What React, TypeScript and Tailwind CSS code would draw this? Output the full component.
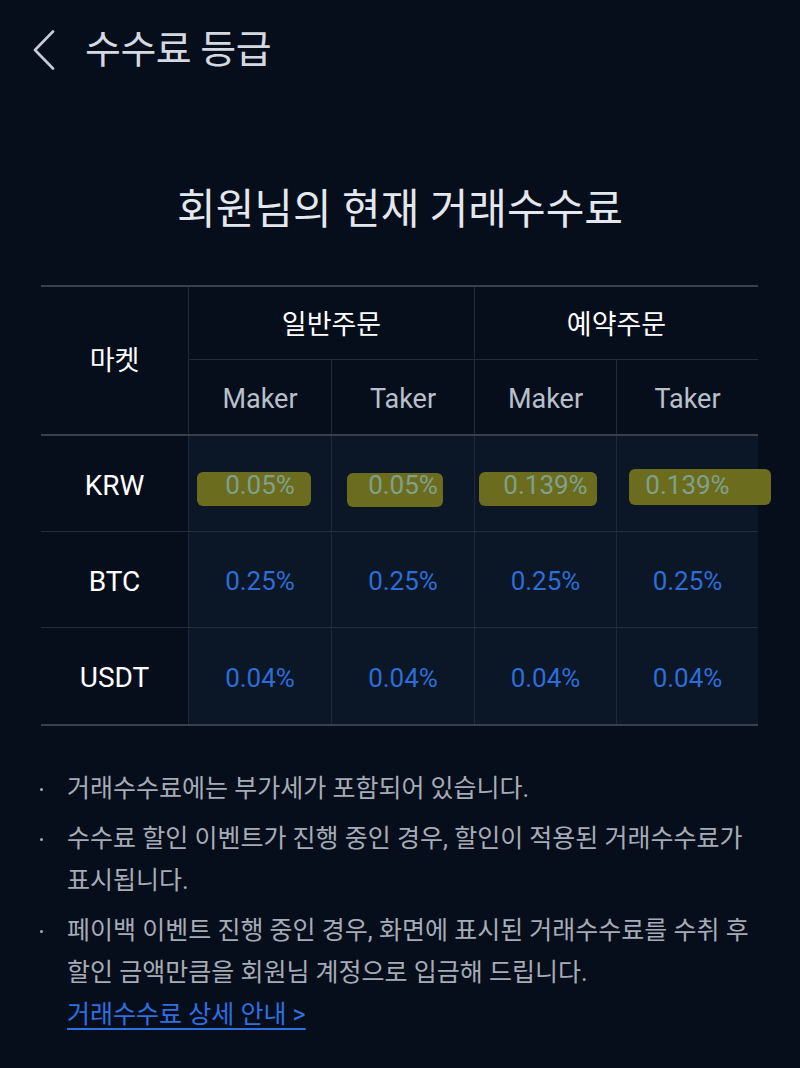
type Mark = { left: number; top: number; width: number; height: number };

type Row = {
  market: string;
  values: string[];
  marks?: Mark[];
};

const rows: Row[] = [
  {
    market: "KRW",
    values: ["0.05%", "0.05%", "0.139%", "0.139%"],
    marks: [
      { left: 8, top: 36, width: 114, height: 34 },
      { left: 15, top: 37, width: 96, height: 34 },
      { left: 4, top: 36, width: 118, height: 34 },
      { left: 12, top: 33, width: 142, height: 36 },
    ],
  },
  { market: "BTC", values: ["0.25%", "0.25%", "0.25%", "0.25%"] },
  { market: "USDT", values: ["0.04%", "0.04%", "0.04%", "0.04%"] },
];

const notes = [
  "거래수수료에는 부가세가 포함되어 있습니다.",
  "수수료 할인 이벤트가 진행 중인 경우, 할인이 적용된 거래수수료가 표시됩니다.",
  "페이백 이벤트 진행 중인 경우, 화면에 표시된 거래수수료를 수취 후 할인 금액만큼을 회원님 계정으로 입금해 드립니다.",
];

export default function App() {
  return (
    <div className="min-h-[1068px] w-[800px] bg-[#060e1c] font-['Roboto','Noto_Sans_CJK_KR',sans-serif] text-[#d9dee6]">
      <header className="flex h-[104px] items-center pl-[33px] pb-[4px]">
        <svg width="22" height="40" viewBox="0 0 22 40" fill="none" className="text-[#c5ccd6]">
          <path d="M20 1.5 L2 20 L20 38.5" stroke="currentColor" strokeWidth="2.6" strokeLinecap="round" strokeLinejoin="round" />
        </svg>
        <h1 className="ml-[30px] text-[39px] tracking-[-0.5px] text-[#d4d9e1]">수수료 등급</h1>
      </header>

      <h2 className="mt-[80px] text-center text-[42px] leading-[52px] text-[#e3e7ee]">
        회원님의 현재 거래수수료
      </h2>

      <div className="mx-[41px] mt-[49px] w-[717px] border-y-2 border-[#38404c]">
        <div className="grid grid-cols-[147px_143px_143px_142px_142px] grid-rows-[73px_74px] border-b-2 border-[#38404c]">
          <div className="row-span-2 flex items-center justify-center pt-[2px] text-[27px] text-white">
            마켓
          </div>
          <div className="col-span-2 flex items-center justify-center border-b border-l border-[#222b38] pt-[4px] text-[27px] text-white">
            일반주문
          </div>
          <div className="col-span-2 flex items-center justify-center border-b border-l border-[#222b38] pt-[4px] text-[27px] text-white">
            예약주문
          </div>
          {["Maker", "Taker", "Maker", "Taker"].map((label, i) => (
            <div
              key={i}
              className="flex items-center justify-center border-l border-[#222b38] pt-[4px] text-[27px] text-[#b9c0cb]"
            >
              {label}
            </div>
          ))}
        </div>

        {rows.map((row, r) => (
          <div
            key={row.market}
            className={
              "grid h-[96px] grid-cols-[147px_143px_143px_142px_142px]" +
              (r < rows.length - 1 ? " border-b border-[#242d3a]" : "")
            }
          >
            <div className="flex items-center justify-center pt-[4px] text-[28px] text-white">
              {row.market}
            </div>
            {row.values.map((v, i) => {
              const mark = row.marks?.[i];
              return (
                <div
                  key={i}
                  className="relative flex items-center justify-center border-l border-[#1f2836] bg-[#0b1626] pt-[4px]"
                >
                  {mark && (
                    <span
                      className="absolute z-0 rounded-[6px] bg-[#6c6c1f]"
                      style={{
                        left: mark.left,
                        top: mark.top,
                        width: mark.width,
                        height: mark.height,
                      }}
                    />
                  )}
                  <span
                    className={
                      "relative z-10 text-[26px] " +
                      (mark ? "text-[#7fa08c]" : "text-[#2c6dd8]")
                    }
                  >
                    {v}
                  </span>
                </div>
              );
            })}
          </div>
        ))}
      </div>

      <ul className="mt-[42px] flex flex-col gap-[8px] pl-[40px] pr-[24px]">
        {notes.map((note, i) => (
          <li key={i} className="flex text-[25px] leading-[42px] text-[#a6acb6]">
            <span className="flex h-[42px] w-[27px] shrink-0 items-center">
              <span className="h-[3px] w-[3px] rounded-full bg-[#a6acb6]" />
            </span>
            <div>
              <p className="break-keep">{note}</p>
              {i === notes.length - 1 && (
                <a className="text-[#2f6fe0] underline decoration-2 underline-offset-[5px]">
                  거래수수료 상세 안내 &gt;
                </a>
              )}
            </div>
          </li>
        ))}
      </ul>
    </div>
  );
}
